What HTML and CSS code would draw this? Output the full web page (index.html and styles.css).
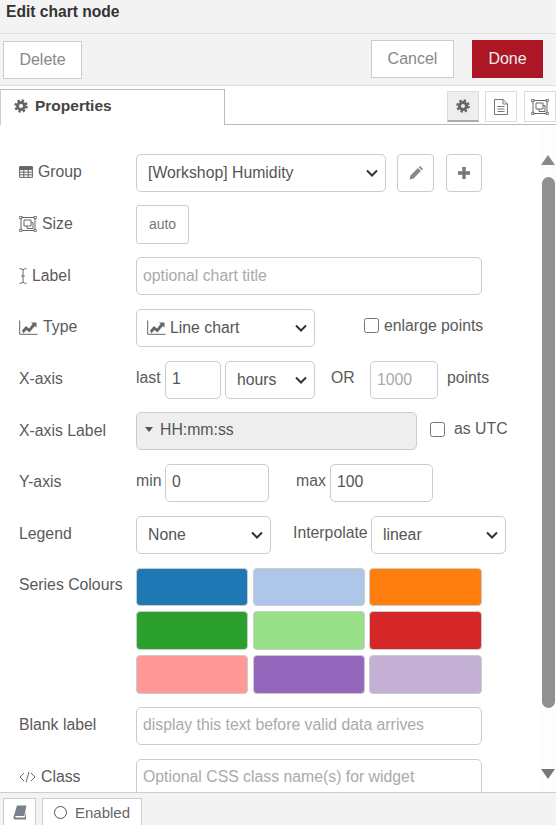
FILE: index.html
```html
<!DOCTYPE html>
<html lang="en">
<head>
  <meta charset="UTF-8">
  <title>Edit chart node</title>
  <link rel="stylesheet" href="styles.css">
</head>
<body>
  <div id="tray">
    <div class="tray-title">Edit chart node</div>
    <div class="toolbar">
      <button class="btn btn-delete">Delete</button>
      <div class="toolbar-right">
        <button class="btn btn-cancel">Cancel</button>
        <button class="btn btn-done">Done</button>
      </div>
    </div>

    <div class="tabs">
      <div class="tab">
        <svg class="icon cog" viewBox="0 0 16 16"><circle cx="8" cy="8" r="6.2" class="cog-teeth"/><circle cx="8" cy="8" r="4" class="cog-ring"/></svg>
        Properties
      </div>
      <div class="tab-btns">
        <div class="tab-btn active"><svg class="icon cog" viewBox="0 0 16 16"><circle cx="8" cy="8" r="6.2" class="cog-teeth"/><circle cx="8" cy="8" r="4" class="cog-ring"/></svg></div>
        <div class="tab-btn"><svg class="icon doc" viewBox="0 0 14 16"><path d="M.5.5h8.500l4.500 4.500v10.500H.5zM9 .5V5h4.500M3.500 7.500h7M3.500 10h7M3.500 12.500h7"/></svg></div>
        <div class="tab-btn"><svg class="icon size" viewBox="0 0 18 16"><path d="M2 1.500h14v13H2zM5 4h7v6H5zM8 10v2.500h6V6.500h-2"/><rect x=".7" y=".5" width="2.200" height="2.200"/><rect x="15.100" y=".5" width="2.200" height="2.200"/><rect x=".7" y="13.300" width="2.200" height="2.200"/><rect x="15.100" y="13.300" width="2.200" height="2.200"/></svg></div>
      </div>
    </div>

    <div class="body">
      <div class="form">
        <div class="row">
          <label class="lbl"><svg class="icon tbl" viewBox="0 0 14 12"><path d="M.6.6h12.800v10.800H.6zM.6 3.600h12.800M.6 6.200h12.800M.6 8.800h12.800M4.800 3.600v7.800M9.200 3.600v7.800"/><path class="solid" d="M.6.6h12.800v3H.6z"/></svg>Group</label>
          <select class="field w-group"><option>[Workshop] Humidity</option></select>
          <button class="square sq-edit"><svg class="icon pencil" viewBox="0 0 14 14"><path class="solid" d="M.5 13.500l1-4 7.400-7.400 3 3-7.400 7.400zM9.700 1.300l.9-.9c.3-.3.700-.3 1 0l2 2c.3.3.3.7 0 1l-.9.9z"/></svg></button>
          <button class="square sq-add"><svg class="icon plus" viewBox="0 0 14 14"><path class="solid" d="M5.300 1h3.400v4.300H13v3.400H8.700V13H5.300V8.700H1V5.300h4.300z"/></svg></button>
        </div>
        <div class="row">
          <label class="lbl"><svg class="icon size" viewBox="0 0 18 16"><path d="M2 1.500h14v13H2zM5 4h7v6H5zM8 10v2.500h6V6.500h-2"/><rect x=".7" y=".5" width="2.200" height="2.200"/><rect x="15.100" y=".5" width="2.200" height="2.200"/><rect x=".7" y="13.300" width="2.200" height="2.200"/><rect x="15.100" y="13.300" width="2.200" height="2.200"/></svg>Size</label>
          <button class="size-btn">auto</button>
        </div>
        <div class="row">
          <label class="lbl"><svg class="icon cursor" viewBox="0 0 8 16"><path d="M.5.8h2L4 1.800 5.500.8h2M4 1.800v12.400M.5 15.200h2L4 14.200l1.500 1h2M2.200 8h3.600"/></svg>Label</label>
          <input class="field w-full" placeholder="optional chart title">
        </div>
        <div class="row">
          <label class="lbl"><svg class="icon chart" viewBox="0 0 19 15"><path class="axis" d="M.7.5v13.800h17.800"/><path class="solid" d="M3 10.500l4-4.500 3 2.500 3.600-4.500-1.600-1.500h5.500v5.200L15.900 6l-5.500 6.500-3-2.500-3 3.600z"/></svg>Type</label>
          <div class="field fake-select w-type">
            <svg class="icon chart" viewBox="0 0 19 15"><path class="axis" d="M.7.5v13.800h17.800"/><path class="solid" d="M3 10.500l4-4.500 3 2.500 3.600-4.500-1.600-1.500h5.500v5.200L15.900 6l-5.500 6.500-3-2.500-3 3.600z"/></svg>
            <span>Line chart</span>
            <svg class="chevron" viewBox="0 0 12 8"><path d="M1 1.500l5 5 5-5"/></svg>
          </div>
          <label class="check check-enlarge"><input type="checkbox"> enlarge points</label>
        </div>
        <div class="row">
          <label class="lbl">X-axis</label>
          <span class="txt txt-last">last</span>
          <input class="field w-num" value="1">
          <select class="field w-unit"><option>hours</option></select>
          <span class="txt txt-or">OR</span>
          <input class="field w-points" placeholder="1000">
          <span class="txt txt-points">points</span>
        </div>
        <div class="row">
          <label class="lbl">X-axis Label</label>
          <div class="field typed w-typed"><i class="caret"></i> HH:mm:ss</div>
          <label class="check check-utc"><input type="checkbox"> as UTC</label>
        </div>
        <div class="row">
          <label class="lbl">Y-axis</label>
          <span class="txt txt-last">min</span>
          <input class="field w-min" value="0">
          <span class="txt txt-max">max</span>
          <input class="field w-max" value="100">
        </div>
        <div class="row">
          <label class="lbl">Legend</label>
          <select class="field w-legend"><option>None</option></select>
          <span class="txt txt-interp">Interpolate</span>
          <select class="field w-legend"><option>linear</option></select>
        </div>
        <div class="row row-colours">
          <label class="lbl">Series Colours</label>
          <div class="swatches">
            <div class="swatch c1"></div>
            <div class="swatch c2"></div>
            <div class="swatch c3"></div>
            <div class="swatch c4"></div>
            <div class="swatch c5"></div>
            <div class="swatch c6"></div>
            <div class="swatch c7"></div>
            <div class="swatch c8"></div>
            <div class="swatch c9"></div>
          </div>
        </div>
        <div class="row">
          <label class="lbl">Blank label</label>
          <input class="field w-full" placeholder="display this text before valid data arrives">
        </div>
        <div class="row">
          <label class="lbl"><svg class="icon code" viewBox="0 0 17 12"><path d="M5 2L1 6l4 4M12 2l4 4-4 4M10 .8L7 11.200"/></svg>Class</label>
          <input class="field w-full" placeholder="Optional CSS class name(s) for widget">
        </div>
      </div>
      <div class="scrollbar">
        <i class="arrow-up"></i>
        <div class="thumb"></div>
        <i class="arrow-down"></i>
      </div>
    </div>

    <div class="footer">
      <button class="foot-btn foot-book"><svg class="icon book" viewBox="0 0 14 15"><path class="solid" d="M4 .5h9.500l-2.300 10.500H3c-.9 0-1.100 1.500 0 1.500h8.700l1.300-6v8H2C.6 14.500.2 13.200.6 11.700z"/></svg></button>
      <button class="foot-btn foot-enabled"><i class="dot"></i> Enabled</button>
    </div>
  </div>
</body>
</html>
```

FILE: styles.css
```css
* {
  box-sizing: border-box;
}
html, body {
  margin: 0;
  height: 100%;
  overflow: hidden;
}
body {
  font-family: "Liberation Sans", Arial, sans-serif;
  font-size: 15.8px;
  color: #5a5a5a;
  background: #fff;
}
#tray {
  height: 825px;
  display: flex;
  flex-direction: column;
}
.tray-title {
  height: 34px;
  flex: none;
  padding: 2px 6px 0;
  line-height: 20px;
  font-weight: bold;
  font-size: 15.6px;
  color: #333;
  background: #f3f3f3;
  border-bottom: 1px solid #ddd;
}
.toolbar {
  height: 52px;
  flex: none;
  display: flex;
  justify-content: space-between;
  padding: 6px 13px 0 3px;
  background: #f3f3f3;
  border-bottom: 1px solid #ddd;
}
.toolbar-right {
  display: flex;
  gap: 18px;
}
.btn {
  height: 38px;
  font: inherit;
  font-size: 16px;
  color: #888;
  background: #fff;
  border: 1px solid #ccc;
  padding: 0;
}
.btn-delete {
  width: 79px;
  margin-top: 1px;
}
.btn-cancel {
  width: 83px;
}
.btn-done {
  width: 71px;
  color: #eee;
  background: #ad1625;
  border-color: #ad1625;
}

.tabs {
  height: 39px;
  flex: none;
  display: flex;
  justify-content: space-between;
  padding-top: 3px;
  border-bottom: 1px solid #bbb;
}
.tab {
  width: 225px;
  height: 36px;
  display: flex;
  align-items: center;
  gap: 7px;
  padding: 0 0 4px 13px;
  font-weight: bold;
  font-size: 15.5px;
  color: #444;
  background: #fff;
  border: 1px solid #bbb;
  border-bottom: none;
  border-left-color: #ccc;
}
.tab-btns {
  display: flex;
  gap: 6px;
  padding-top: 2px;
}
.tab-btn {
  width: 32px;
  height: 31px;
  display: flex;
  align-items: center;
  justify-content: center;
  border: 1px solid #ddd;
}
.tab-btn + .tab-btn + .tab-btn {
  margin-left: 1px;
}
.tab-btn.active {
  background: #eee;
  border-bottom: 2px solid #aaa;
}

.icon {
  flex: none;
  display: inline-block;
  fill: none;
  stroke: #666;
  stroke-width: 1;
}
.icon .solid {
  fill: #666;
  stroke: none;
}
.icon rect {
  fill: #fff;
  stroke-width: 0.8;
}
.cog {
  width: 14px;
  height: 14px;
}
.cog-teeth {
  stroke-width: 3;
  stroke-dasharray: 2.6 2.27;
}
.cog-ring {
  stroke-width: 3.4;
}
.doc {
  width: 14px;
  height: 16px;
  stroke: #777;
}
.size {
  width: 18px;
  height: 16px;
}
.tbl {
  width: 14px;
  height: 12px;
}
.cursor {
  width: 8px;
  height: 16px;
}
.chart {
  width: 19px;
  height: 15px;
}
.code {
  width: 17px;
  height: 12px;
}
.book {
  width: 14px;
  height: 15px;
}
.book .solid {
  fill: #7a7f8c;
}
.pencil {
  width: 14px;
  height: 14px;
}
.pencil .solid {
  fill: #888;
}
.plus {
  width: 14px;
  height: 14px;
}
.plus .solid {
  fill: #777;
}

.body {
  flex: 1;
  min-height: 0;
  display: flex;
  overflow: hidden;
}
.form {
  flex: 1;
  padding: 28.75px 0 0 19px;
}
.row {
  height: 38px;
  margin-bottom: 13.7px;
  display: flex;
  align-items: center;
}
.lbl {
  width: 117px;
  flex: none;
  display: flex;
  align-items: center;
  gap: 5px;
  margin-top: -1px;
}
.field {
  height: 38px;
  font: inherit;
  color: #555;
  background: #fff;
  border: 1px solid #ccc;
  border-radius: 5px;
  padding: 0 6px 1px;
}
input.field::placeholder {
  color: #aaa;
}
select.field {
  appearance: none;
  padding: 0 24px 1px 11px;
  background: #fff url("data:image/svg+xml,%3Csvg xmlns='http://www.w3.org/2000/svg' width='12' height='8'%3E%3Cpath d='M1 1.500l5 5 5-5' fill='none' stroke='%23333' stroke-width='2'/%3E%3C/svg%3E") no-repeat right 7px center;
}
.square {
  width: 37px;
  height: 38px;
  display: flex;
  align-items: center;
  justify-content: center;
  background: #fff;
  border: 1px solid #ccc;
  border-radius: 4px;
  padding: 0;
}
.sq-edit {
  margin-left: 11px;
}
.sq-add {
  width: 36px;
  margin-left: 12px;
}
.size-btn {
  width: 53px;
  height: 39px;
  align-self: flex-start;
  font: inherit;
  font-size: 14px;
  color: #777;
  background: #fff;
  border: 1px solid #ccc;
  border-radius: 3px;
  padding: 0 0 2px;
}
.w-group {
  width: 250px;
}
.w-full {
  width: 346px;
}
.w-type {
  width: 179px;
}
.fake-select {
  display: flex;
  align-items: center;
  gap: 4px;
  padding: 0 7px 0 10px;
}
.chevron {
  width: 12px;
  height: 8px;
  margin-left: auto;
  fill: none;
  stroke: #333;
  stroke-width: 2;
}
.check {
  display: flex;
  align-items: center;
  margin-top: -4px;
}
.check input {
  width: 15px;
  height: 15px;
  margin: 0 5px 0 0;
}
.check-enlarge {
  margin-left: 49px;
}
.check-utc {
  margin-left: 13px;
}
.check-utc input {
  margin-right: 9px;
}
.txt {
  flex: none;
  margin-top: -3px;
}
.txt-last {
  width: 29px;
}
.w-num {
  width: 56px;
}
.w-unit {
  width: 90px;
  margin-left: 4px;
}
.txt-or {
  margin-left: 16px;
  width: 39px;
}
.w-points {
  width: 68px;
  padding-bottom: 0;
}
.txt-points {
  margin-left: 9px;
}
.typed {
  display: flex;
  align-items: center;
  gap: 7px;
  background: #eee;
  padding-left: 8px;
  padding-bottom: 3px;
}
.w-typed {
  width: 281px;
}
.caret {
  width: 0;
  height: 0;
  border-left: 4.5px solid transparent;
  border-right: 4.5px solid transparent;
  border-top: 5px solid #555;
}
.w-min {
  width: 104px;
}
.txt-max {
  margin-left: 27px;
  width: 34px;
}
.w-max {
  width: 103px;
}
.w-legend {
  width: 135px;
}
.txt-interp {
  margin-left: 22px;
  width: 78px;
}
.row-colours {
  height: 126px;
  align-items: flex-start;
}
.row-colours .lbl {
  margin-top: 9px;
}
.swatches {
  margin-top: 0.5px;
  display: grid;
  grid-template-columns: 112px 112px 113px;
  grid-auto-rows: 38.6px;
  gap: 5px 4.6px;
}
.swatch {
  border: 1px solid #ccc;
  border-radius: 4px;
}
.c1 { background: #1f77b4; }
.c2 { background: #aec7e8; }
.c3 { background: #ff7f0e; }
.c4 { background: #2ca02c; }
.c5 { background: #98df8a; }
.c6 { background: #d62728; }
.c7 { background: #ff9896; }
.c8 { background: #9467bd; }
.c9 { background: #c5b0d5; }

.scrollbar {
  width: 16px;
  flex: none;
  display: flex;
  flex-direction: column;
  align-items: center;
  padding: 30px 0 13px;
  background: #fdfdfd;
}
.arrow-up, .arrow-down {
  width: 0;
  height: 0;
  flex: none;
  border-left: 7px solid transparent;
  border-right: 7px solid transparent;
}
.arrow-up {
  border-bottom: 10px solid #888;
}
.arrow-down {
  margin-top: auto;
  border-top: 10px solid #777;
}
.thumb {
  width: 13px;
  height: 531px;
  margin-top: 12px;
  background: #909090;
  border-radius: 7px;
}

.footer {
  height: 33px;
  flex: none;
  display: flex;
  align-items: flex-end;
  gap: 6px;
  padding-left: 3px;
  background: #f3f3f3;
  border-top: 1px solid #ccc;
}
.foot-btn {
  height: 27px;
  display: flex;
  align-items: center;
  justify-content: center;
  font: inherit;
  font-size: 15px;
  color: #666;
  background: #fff;
  border: 1px solid #ccc;
  border-bottom: none;
  padding: 0;
}
.foot-book {
  width: 33px;
}
.foot-enabled {
  width: 100px;
  gap: 8px;
}
.dot {
  width: 13px;
  height: 13px;
  border: 1.5px solid #555;
  border-radius: 50%;
}
```
